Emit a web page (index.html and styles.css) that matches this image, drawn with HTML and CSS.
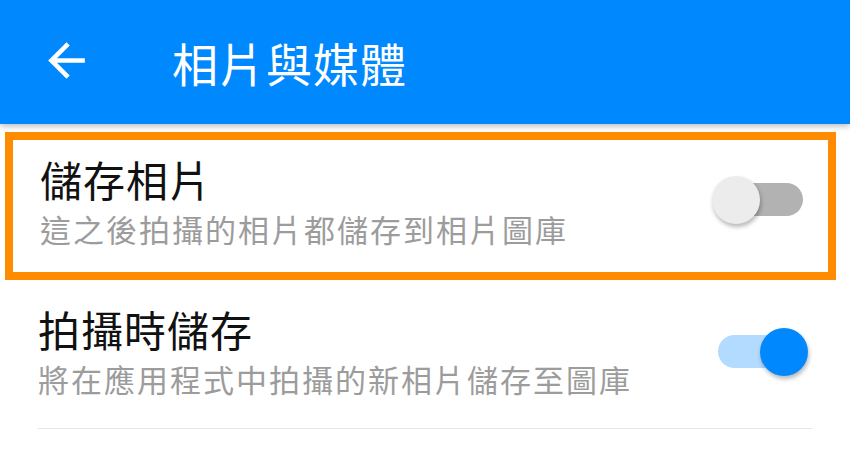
FILE: index.html
```html
<!DOCTYPE html>
<html lang="zh-Hant">
<head>
<meta charset="utf-8">
<title>相片與媒體</title>
<link rel="stylesheet" href="styles.css">
</head>
<body>
<header class="appbar">
  <svg class="back" viewBox="0 0 24 24" width="55" height="55" aria-hidden="true">
    <path d="M20 11H7.83l5.59-5.59L12 4l-8 8 8 8 1.41-1.41L7.83 13H20v-2z" fill="#fff"/>
  </svg>
  <h1 class="appbar-title">相片與媒體</h1>
</header>
<main class="list">
  <div class="item item-highlight">
    <div class="item-text">
      <div class="item-title">儲存相片</div>
      <div class="item-sub">這之後拍攝的相片都儲存到相片圖庫</div>
    </div>
    <div class="switch switch-off">
      <div class="track"></div>
      <div class="thumb"></div>
    </div>
  </div>
  <div class="item item-plain">
    <div class="item-text">
      <div class="item-title">拍攝時儲存</div>
      <div class="item-sub">將在應用程式中拍攝的新相片儲存至圖庫</div>
    </div>
    <div class="switch switch-on">
      <div class="track"></div>
      <div class="thumb"></div>
    </div>
  </div>
</main>
</body>
</html>
```
FILE: styles.css
```css
html, body {
  margin: 0;
  padding: 0;
  background: #ffffff;
  font-family: "Noto Sans CJK TC", "Noto Sans", sans-serif;
}
body {
  width: 850px;
  height: 454px;
  overflow: hidden;
}
.appbar {
  height: 124px;
  background: #0088ff;
  display: flex;
  align-items: center;
  box-shadow: 0 2px 6px rgba(0, 0, 0, 0.28);
  position: relative;
  z-index: 1;
}
.back {
  margin-left: 39px;
  margin-top: -4px;
  flex: none;
}
.appbar-title {
  margin: 0 0 0 78px;
  font-size: 46px;
  font-weight: normal;
  color: #ffffff;
  letter-spacing: 1px;
  line-height: 56px;
}
.list {
  display: flex;
  flex-direction: column;
}
.item {
  display: flex;
  align-items: center;
}
.item-highlight {
  margin: 8px 14px 0 5px;
  height: 148px;
  box-sizing: border-box;
  border: 8px solid #ff8c00;
  padding: 15px 20px 23px 27px;
}
.item-plain {
  margin: 0 38px 0 38px;
  padding: 25px 4px 29px 0;
  border-bottom: 1px solid #e6e6e6;
}
.item-text {
  flex: 1;
  display: flex;
  flex-direction: column;
}
.item-title {
  font-size: 42px;
  line-height: 48px;
  color: #111111;
  letter-spacing: 1px;
}
.item-sub {
  margin-top: 6px;
  font-size: 31px;
  line-height: 40px;
  color: #9c9c9c;
  letter-spacing: 2px;
}
.switch {
  position: relative;
  width: 96px;
  height: 48px;
  flex: none;
}
.switch-off {
  margin-bottom: 4px;
}
.track {
  margin: 7px 0 0 6px;
  width: 85px;
  height: 33px;
  border-radius: 17px;
}
.thumb {
  position: absolute;
  top: 0;
  width: 48px;
  height: 48px;
  border-radius: 50%;
  box-shadow: 1px 3px 4px rgba(0, 0, 0, 0.28);
}
.switch-off .track { background: #b2b2b2; }
.switch-off .thumb { left: 0; background: #ececec; }
.switch-on .track { background: #b3daff; }
.switch-on .thumb { left: 48px; background: #0088ff; }
```
